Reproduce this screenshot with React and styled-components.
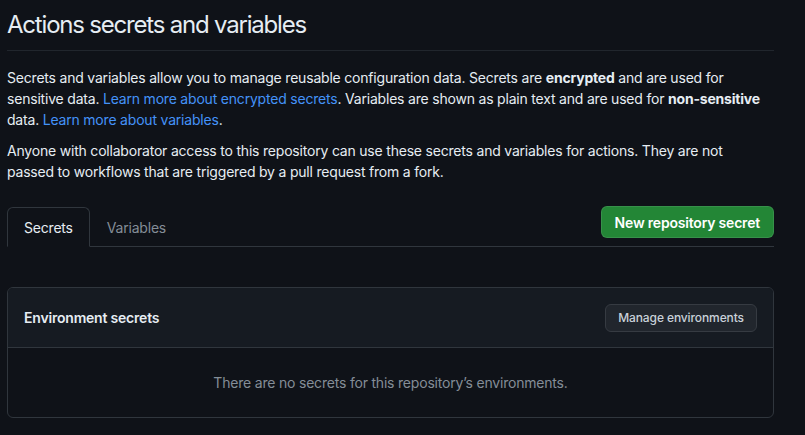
import React from 'react';
import styled, { createGlobalStyle } from 'styled-components';

const GlobalStyle = createGlobalStyle`
  *, *::before, *::after { box-sizing: border-box; }
  html, body { margin: 0; padding: 0; }
  body {
    background: #0f1218;
    color: #e6edf3;
    font-family: Inter, "Noto Sans", sans-serif;
    font-size: 14px;
    line-height: 21px;
    letter-spacing: -0.2px;
  }
`;

const Page = styled.div`
  padding: 0 31px 0 7px;
`;

const Header = styled.div`
  padding-top: 10px;
  padding-bottom: 10px;
  border-bottom: 1px solid #21262d;
  margin-bottom: 16px;
`;

const Title = styled.h2`
  margin: 0;
  font-size: 24px;
  line-height: 30px;
  font-weight: 400;
  letter-spacing: -1.2px;
  color: #e6edf3;
`;

const Text = styled.p`
  margin: 0 12px 10px 0;
  color: #e6edf3;
`;

const Link = styled.a`
  color: #4493f8;
  text-decoration: none;
`;

const TabBar = styled.div`
  display: flex;
  align-items: flex-end;
  justify-content: space-between;
  border-bottom: 1px solid #30363d;
  margin-top: 24px;
`;

const Tabs = styled.div`
  display: flex;
`;

const Tab = styled.div`
  padding: 0 16px;
  height: 40px;
  display: flex;
  align-items: center;
  margin-bottom: -1px;
  border: 1px solid ${p => (p.$active ? '#30363d' : 'transparent')};
  border-bottom-color: ${p => (p.$active ? '#0f1218' : 'transparent')};
  border-radius: 6px 6px 0 0;
  color: ${p => (p.$active ? '#e6edf3' : '#848d97')};
  background: ${p => (p.$active ? '#0f1218' : 'transparent')};
`;

const PrimaryButton = styled.button`
  font: inherit;
  letter-spacing: -0.2px;
  font-weight: 600;
  color: #fff;
  background: #238636;
  border: 1px solid rgba(240, 246, 252, 0.1);
  border-radius: 6px;
  height: 32px;
  padding: 0 13px;
  margin-bottom: 8px;
`;

const Box = styled.div`
  margin-top: 40px;
  border: 1px solid #30363d;
  border-radius: 6px;
  overflow: hidden;
`;

const BoxHeader = styled.div`
  display: flex;
  align-items: center;
  justify-content: space-between;
  background: #161b22;
  padding: 0 16px;
  height: 60px;
  border-bottom: 1px solid #30363d;
`;

const BoxTitle = styled.div`
  font-weight: 600;
`;

const SmallButton = styled.button`
  font: inherit;
  font-size: 12px;
  letter-spacing: -0.1px;
  font-weight: 500;
  color: #c9d1d9;
  background: #21262d;
  border: 1px solid #363b42;
  border-radius: 6px;
  height: 28px;
  padding: 0 12px;
`;

const Empty = styled.div`
  height: 69px;
  display: flex;
  align-items: center;
  justify-content: center;
  color: #848d97;
`;

export default function App() {
  return (
    <>
      <GlobalStyle />
      <Page>
        <Header>
          <Title>Actions secrets and variables</Title>
        </Header>
        <Text>
          Secrets and variables allow you to manage reusable configuration data. Secrets are{' '}
          <strong>encrypted</strong> and are used for sensitive data.{' '}
          <Link href="#">Learn more about encrypted secrets</Link>. Variables are shown as plain
          text and are used for <strong>non-sensitive</strong> data.{' '}
          <Link href="#">Learn more about variables</Link>.
        </Text>
        <Text>
          Anyone with collaborator access to this repository can use these secrets and variables
          for actions. They are not passed to workflows that are triggered by a pull request from a
          fork.
        </Text>
        <TabBar>
          <Tabs>
            <Tab $active>Secrets</Tab>
            <Tab>Variables</Tab>
          </Tabs>
          <PrimaryButton>New repository secret</PrimaryButton>
        </TabBar>
        <Box>
          <BoxHeader>
            <BoxTitle>Environment secrets</BoxTitle>
            <SmallButton>Manage environments</SmallButton>
          </BoxHeader>
          <Empty>There are no secrets for this repository’s environments.</Empty>
        </Box>
      </Page>
    </>
  );
}
